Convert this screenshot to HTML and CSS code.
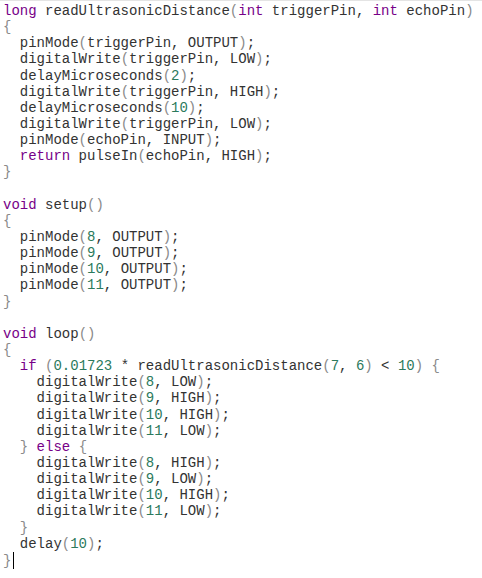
FILE: index.html
```html
<!DOCTYPE html>
<html>
<head>
<meta charset="utf-8">
<link rel="stylesheet" href="styles.css">
</head>
<body>
<div class="editor">
<div class="code">
<div class="ln"><span class="kw">long</span> readUltrasonicDistance<span class="p">(</span><span class="kw">int</span> triggerPin, <span class="kw">int</span> echoPin<span class="p">)</span></div>
<div class="ln"><span class="p">{</span></div>
<div class="ln i1">pinMode<span class="p">(</span>triggerPin, OUTPUT<span class="p">)</span>;</div>
<div class="ln i1">digitalWrite<span class="p">(</span>triggerPin, LOW<span class="p">)</span>;</div>
<div class="ln i1">delayMicroseconds<span class="p">(</span><span class="n">2</span><span class="p">)</span>;</div>
<div class="ln i1">digitalWrite<span class="p">(</span>triggerPin, HIGH<span class="p">)</span>;</div>
<div class="ln i1">delayMicroseconds<span class="p">(</span><span class="n">10</span><span class="p">)</span>;</div>
<div class="ln i1">digitalWrite<span class="p">(</span>triggerPin, LOW<span class="p">)</span>;</div>
<div class="ln i1">pinMode<span class="p">(</span>echoPin, INPUT<span class="p">)</span>;</div>
<div class="ln i1"><span class="kw">return</span> pulseIn<span class="p">(</span>echoPin, HIGH<span class="p">)</span>;</div>
<div class="ln"><span class="p">}</span></div>
<div class="ln"> </div>
<div class="ln"><span class="kw">void</span> setup<span class="p">()</span></div>
<div class="ln"><span class="p">{</span></div>
<div class="ln i1">pinMode<span class="p">(</span><span class="n">8</span>, OUTPUT<span class="p">)</span>;</div>
<div class="ln i1">pinMode<span class="p">(</span><span class="n">9</span>, OUTPUT<span class="p">)</span>;</div>
<div class="ln i1">pinMode<span class="p">(</span><span class="n">10</span>, OUTPUT<span class="p">)</span>;</div>
<div class="ln i1">pinMode<span class="p">(</span><span class="n">11</span>, OUTPUT<span class="p">)</span>;</div>
<div class="ln"><span class="p">}</span></div>
<div class="ln"> </div>
<div class="ln"><span class="kw">void</span> loop<span class="p">()</span></div>
<div class="ln"><span class="p">{</span></div>
<div class="ln i1"><span class="kw">if</span> <span class="p">(</span><span class="n">0.01723</span> * readUltrasonicDistance<span class="p">(</span><span class="n">7</span>, <span class="n">6</span><span class="p">)</span> &lt; <span class="n">10</span><span class="p">)</span> <span class="p">{</span></div>
<div class="ln i2">digitalWrite<span class="p">(</span><span class="n">8</span>, LOW<span class="p">)</span>;</div>
<div class="ln i2">digitalWrite<span class="p">(</span><span class="n">9</span>, HIGH<span class="p">)</span>;</div>
<div class="ln i2">digitalWrite<span class="p">(</span><span class="n">10</span>, HIGH<span class="p">)</span>;</div>
<div class="ln i2">digitalWrite<span class="p">(</span><span class="n">11</span>, LOW<span class="p">)</span>;</div>
<div class="ln i1"><span class="p">}</span> <span class="kw">else</span> <span class="p">{</span></div>
<div class="ln i2">digitalWrite<span class="p">(</span><span class="n">8</span>, HIGH<span class="p">)</span>;</div>
<div class="ln i2">digitalWrite<span class="p">(</span><span class="n">9</span>, LOW<span class="p">)</span>;</div>
<div class="ln i2">digitalWrite<span class="p">(</span><span class="n">10</span>, HIGH<span class="p">)</span>;</div>
<div class="ln i2">digitalWrite<span class="p">(</span><span class="n">11</span>, LOW<span class="p">)</span>;</div>
<div class="ln i1"><span class="p">}</span></div>
<div class="ln i1">delay<span class="p">(</span><span class="n">10</span><span class="p">)</span>;</div>
<div class="ln"><span class="p">}</span><span class="cursor"></span></div>
</div>
</div>
</body>
</html>
```
FILE: styles.css
```css
html, body {
  margin: 0;
  padding: 0;
  background: #ffffff;
}
.editor {
  width: 482px;
  height: 578px;
  box-sizing: border-box;
  border-top: 1px solid #e4e4e4;
  padding: 2px 0 0 3px;
  overflow: hidden;
}
.code {
  font-family: "Liberation Mono", "Courier New", monospace;
  font-size: 14px;
  color: #333333;
}
.ln {
  height: 16.15px;
  line-height: 16.15px;
  white-space: pre;
}
.i1 { padding-left: 16.8px; }
.i2 { padding-left: 33.6px; }
.kw { color: #770088; }
.n { color: #2b7a5c; }
.p { color: #8a8a8a; }
.cursor {
  display: inline-block;
  width: 1px;
  height: 17px;
  background: #000000;
  vertical-align: -4px;
  margin-left: 2px;
}
```
